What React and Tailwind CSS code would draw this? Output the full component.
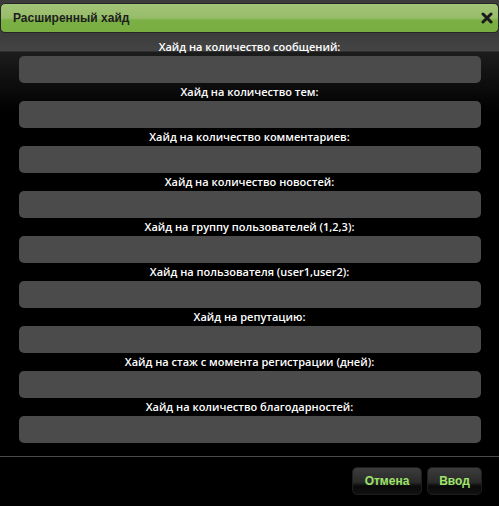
import React from "react";

const fields = [
  "Хайд на количество сообщений:",
  "Хайд на количество тем:",
  "Хайд на количество комментариев:",
  "Хайд на количество новостей:",
  "Хайд на группу пользователей (1,2,3):",
  "Хайд на пользователя (user1,user2):",
  "Хайд на репутацию:",
  "Хайд на стаж с момента регистрации (дней):",
  "Хайд на количество благодарностей:",
];

const App = () => {
  return (
    <div className="w-[499px] h-[506px] bg-black overflow-hidden font-['Open_Sans',sans-serif]">
      {/* Title bar */}
      <div className="bg-[#3c3c3c] pt-[3px]">
        <div className="h-[30px] flex items-center justify-between pl-[12px] pr-[4px] rounded-[5px] border border-[#262626] bg-[linear-gradient(to_bottom,#a2c478_0%,#97bd69_50%,#7bb045_58%,#78ad42_100%)]">
          <span className="text-[12px] font-bold text-[#1e1e1e] font-['Liberation_Sans',sans-serif]">Расширенный хайд</span>
          <svg width="12" height="12" viewBox="0 0 12 12" className="mr-[1px]">
            <path d="M2 2 L10 10 M10 2 L2 10" stroke="#1a1a1a" strokeWidth="3" strokeLinecap="round" />
          </svg>
        </div>
      </div>

      {/* Fields */}
      <div className="bg-[linear-gradient(to_bottom,#3c3c3c_0px,#444_18px,#1c1c1c_19px,#000_80px)] pt-[6px] pb-[12px]">
        {fields.map((label) => (
          <div key={label} className="flex flex-col items-center h-[45px]">
            <div className="h-[16px] text-[11px] font-semibold text-white leading-[16px]">{label}</div>
            <div className="mt-[1px] w-[462px] h-[27px] rounded-[5px] bg-[#4b4b4b]" />
          </div>
        ))}
      </div>

      {/* Footer */}
      <div className="border-t border-[#4a4a4a] flex justify-end gap-[5px] pr-[17px] pt-[10px]">
        <button className="w-[70px] h-[28px] rounded-[5px] border border-[#1e1e1e] bg-[linear-gradient(to_bottom,#3c3c3c_0%,#2a2a2a_55%,#0a0a0a_70%,#111_100%)] text-[12px] font-bold text-[#9ee36a] font-['Liberation_Sans',sans-serif]">
          Отмена
        </button>
        <button className="w-[55px] h-[28px] rounded-[5px] border border-[#1e1e1e] bg-[linear-gradient(to_bottom,#3c3c3c_0%,#2a2a2a_55%,#0a0a0a_70%,#111_100%)] text-[12px] font-bold text-[#9ee36a] font-['Liberation_Sans',sans-serif]">
          Ввод
        </button>
      </div>
    </div>
  );
};

export default App;
